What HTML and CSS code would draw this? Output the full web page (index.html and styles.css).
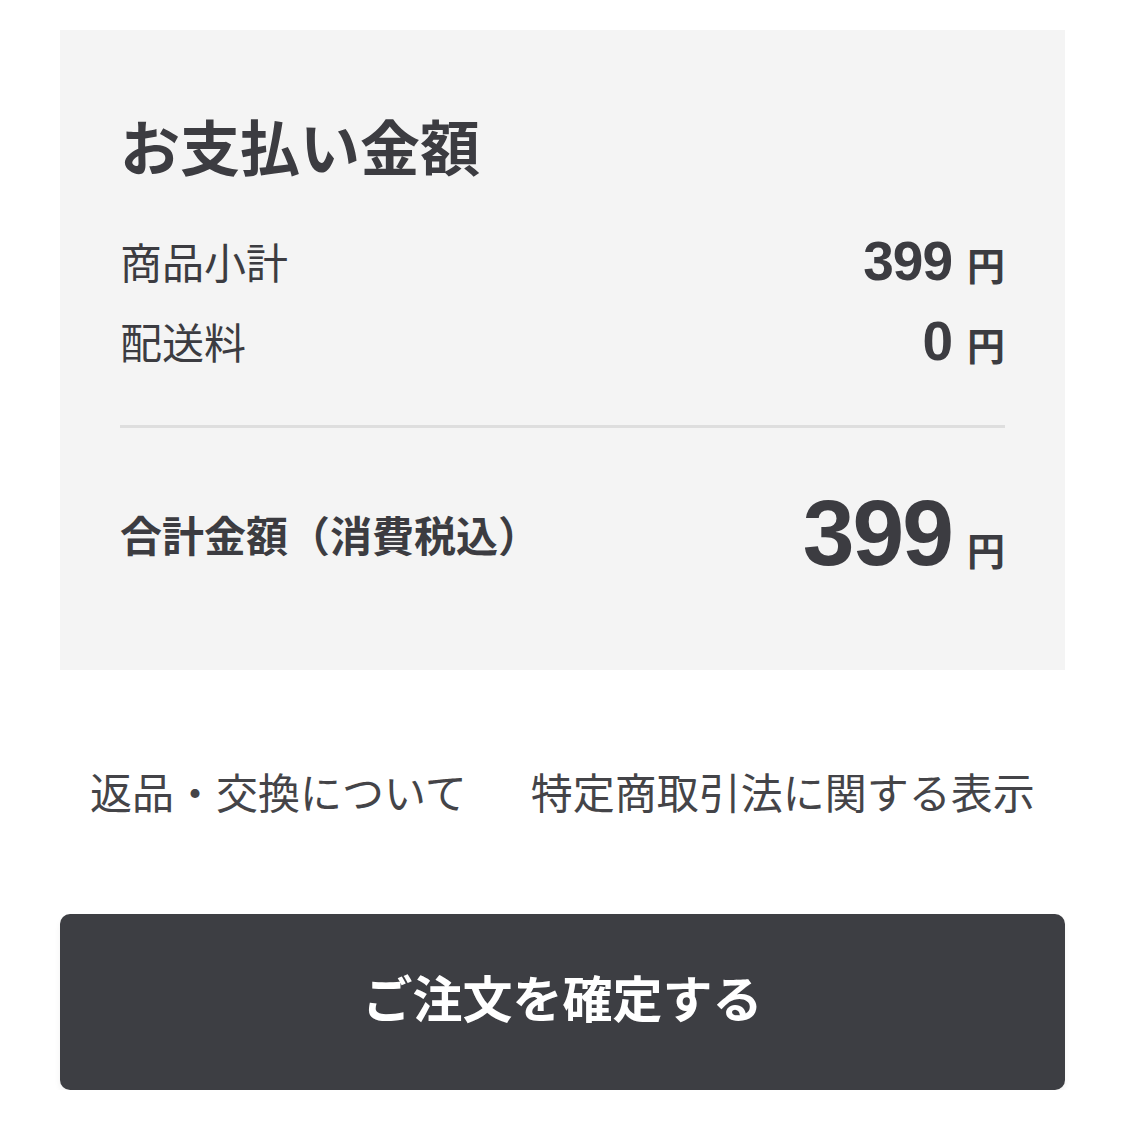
FILE: index.html
```html
<!DOCTYPE html>
<html lang="ja">
<head>
<meta charset="utf-8">
<link rel="stylesheet" href="styles.css">
</head>
<body>
<main class="page">
  <section class="summary">
    <h2 class="summary-title">お支払い金額</h2>
    <div class="row">
      <span class="row-label">商品小計</span>
      <span class="row-value"><span class="num">399</span> <span class="yen">円</span></span>
    </div>
    <div class="row">
      <span class="row-label">配送料</span>
      <span class="row-value"><span class="num">0</span> <span class="yen">円</span></span>
    </div>
    <hr class="divider">
    <div class="total">
      <span class="total-label">合計金額（消費税込）</span>
      <span class="total-value"><span class="total-num">399</span> <span class="yen">円</span></span>
    </div>
  </section>
  <nav class="links">
    <a class="link">返品・交換について</a>
    <a class="link">特定商取引法に関する表示</a>
  </nav>
  <button class="confirm">ご注文を確定する</button>
</main>
</body>
</html>
```
FILE: styles.css
```css
html, body {
  margin: 0;
  padding: 0;
  background: #ffffff;
}
body {
  font-family: "Liberation Sans", "Noto Sans CJK JP", sans-serif;
  color: #3c3c41;
}
.page {
  width: 1005px;
  margin: 0 0 0 60px;
  padding-top: 30px;
  display: flex;
  flex-direction: column;
}
.summary {
  background: #f4f4f4;
  padding: 75px 60px 87px 60px;
  display: flex;
  flex-direction: column;
}
.summary-title {
  margin: 0 0 36px 0;
  font-family: "Noto Sans CJK JP", sans-serif;
  font-size: 60px;
  line-height: 80px;
  font-weight: 700;
}
.row {
  display: flex;
  justify-content: space-between;
  align-items: center;
  height: 80px;
}
.row-label {
  font-family: "Noto Sans CJK JP", sans-serif;
  font-size: 42px;
  font-weight: 400;
  line-height: 80px;
}
.row-value {
  display: flex;
  align-items: baseline;
  gap: 15px;
}
.num {
  font-family: "Liberation Sans", sans-serif;
  font-weight: 700;
  font-size: 55px;
  letter-spacing: -1px;
}
.yen {
  font-family: "Noto Sans CJK JP", sans-serif;
  font-weight: 700;
  font-size: 38px;
}
.divider {
  margin: 44px 0 0 0;
  border: none;
  height: 3px;
  background: #dedede;
}
.total {
  margin-top: 55px;
  height: 100px;
  display: flex;
  justify-content: space-between;
  align-items: center;
}
.total-label {
  font-family: "Noto Sans CJK JP", sans-serif;
  font-size: 42px;
  font-weight: 700;
}
.total-value {
  display: flex;
  align-items: baseline;
  gap: 15px;
}
.total-num {
  font-family: "Liberation Sans", sans-serif;
  font-weight: 700;
  font-size: 93px;
  letter-spacing: -2px;
}
.links {
  display: flex;
  justify-content: center;
  gap: 64px;
  margin-top: 92px;
  height: 56px;
  align-items: center;
}
.link {
  font-family: "Noto Sans CJK JP", sans-serif;
  font-size: 42px;
  color: #444448;
  text-decoration: none;
  white-space: nowrap;
}
.confirm {
  margin-top: 96px;
  height: 176px;
  border: none;
  border-radius: 10px;
  background: #3d3e43;
  color: #ffffff;
  font-family: "Noto Sans CJK JP", sans-serif;
  font-size: 50px;
  font-weight: 700;
  box-shadow: 0 4px 6px rgba(0, 0, 0, 0.06);
  padding: 0 0 12px 0;
}
```
